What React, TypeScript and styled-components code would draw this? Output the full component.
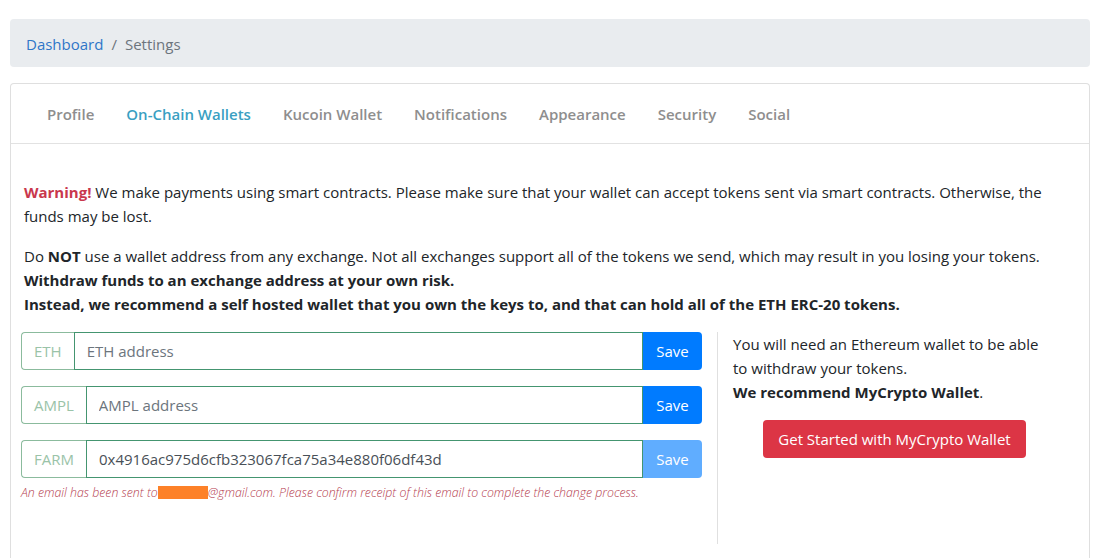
import React from "react";
import styled, { createGlobalStyle } from "styled-components";

const FONT = `"Open Sans", "Noto Sans", Arial, sans-serif`;

const Global = createGlobalStyle`
  html, body { margin: 0; padding: 0; background: #fff; }
  body { font-family: ${FONT}; font-size: 15px; color: #212529; }
  * { box-sizing: border-box; }
`;

const Page = styled.div`
  padding: 19px 11px 0 10px;
  display: flex;
  flex-direction: column;
  gap: 16px;
`;

const Breadcrumb = styled.nav`
  height: 48px;
  background: #e9ecef;
  border-radius: 4px;
  display: flex;
  align-items: center;
  padding: 1px 16px 0 16px;
  font-size: 15px;
  color: #6c757d;
`;

const Crumb = styled.a`
  color: #2f76c8;
  text-decoration: none;
`;

const Sep = styled.span`
  padding: 0 8px;
  color: #6c757d;
`;

const Card = styled.div`
  border: 1px solid #dfdfdf;
  border-bottom: none;
  border-radius: 4px 4px 0 0;
  background: #fff;
  min-height: 480px;
`;

const TabBar = styled.div`
  height: 60px;
  border-bottom: 1px solid #e2e2e2;
  display: flex;
  align-items: center;
  padding: 0 20px;
`;

const Tab = styled.a<{ $active?: boolean }>`
  padding: 0 16px;
  font-size: 15px;
  font-weight: 600;
  color: ${(p) => (p.$active ? "#3a9fc2" : "#8e8e8e")};
  text-decoration: none;
`;

const Body = styled.div`
  padding: 36px 13px 0 13px;
`;

const Para = styled.p`
  margin: 0 0 16px 0;
  line-height: 24px;
  font-size: 15px;
  color: #212529;
`;

const Danger = styled.strong`
  color: #c9374d;
  font-weight: 700;
`;

const Row = styled.div`
  display: flex;
  margin-left: -3px;
`;

const LeftCol = styled.div`
  width: 681px;
  display: flex;
  flex-direction: column;
  gap: 16px;
  padding-bottom: 43px;
`;

const RightCol = styled.div`
  flex: 1;
  margin-left: 15px;
  border-left: 1px solid #e0e0e0;
  padding-left: 15px;
  display: flex;
  flex-direction: column;
`;

const InputGroup = styled.div`
  display: flex;
  height: 38px;
`;

const Prepend = styled.span`
  display: flex;
  align-items: center;
  padding: 0 12px;
  border: 1px solid #8bbb9d;
  border-right: none;
  border-radius: 4px 0 0 4px;
  color: #9ac3a8;
  font-size: 15px;
`;

const AddrInput = styled.input`
  flex: 1;
  min-width: 0;
  border: 1px solid #449570;
  padding: 0 12px;
  font-family: ${FONT};
  font-size: 15px;
  color: #495057;
  outline: none;
  &::placeholder { color: #6c757d; opacity: 1; }
`;

const SaveBtn = styled.button<{ $disabled?: boolean }>`
  width: 59px;
  border: none;
  border-radius: 0 4px 4px 0;
  background: #007bff;
  color: #fff;
  font-family: ${FONT};
  font-size: 15px;
  opacity: ${(p) => (p.$disabled ? 0.62 : 1)};
  cursor: pointer;
`;

const Field = styled.div`
  display: flex;
  flex-direction: column;
`;

const Notice = styled.small`
  margin-top: 6px;
  font-size: 12.3px;
  font-style: italic;
  font-weight: 300;
  color: #b5404f;
  display: flex;
  align-items: center;
  white-space: pre;
`;

const Redacted = styled.span`
  display: inline-block;
  width: 50px;
  height: 13px;
  background: #fd8128;
`;

const InfoText = styled.p`
  margin: 0;
  line-height: 24px;
  font-size: 15px;
  color: #212529;
  width: 320px;
`;

const CtaWrap = styled.div`
  display: flex;
  justify-content: center;
  margin-top: 16px;
  padding-right: 20px;
`;

const Cta = styled.button`
  height: 38px;
  padding: 0 15px;
  border: none;
  border-radius: 4px;
  background: #dc3545;
  color: #fff;
  font-family: ${FONT};
  font-size: 15px;
`;

const wallets = [
  { label: "ETH", placeholder: "ETH address", value: "", disabled: false },
  { label: "AMPL", placeholder: "AMPL address", value: "", disabled: false },
  {
    label: "FARM",
    placeholder: "FARM address",
    value: "0x4916ac975d6cfb323067fca75a34e880f06df43d",
    disabled: true,
  },
];

const tabs = [
  "Profile",
  "On-Chain Wallets",
  "Kucoin Wallet",
  "Notifications",
  "Appearance",
  "Security",
  "Social",
];

export default function App() {
  return (
    <>
      <Global />
      <Page>
        <Breadcrumb>
          <Crumb href="#">Dashboard</Crumb>
          <Sep>/</Sep>
          <span>Settings</span>
        </Breadcrumb>
        <Card>
          <TabBar>
            {tabs.map((t) => (
              <Tab key={t} href="#" $active={t === "On-Chain Wallets"}>
                {t}
              </Tab>
            ))}
          </TabBar>
          <Body>
            <Para>
              <Danger>Warning!</Danger> We make payments using smart contracts. Please make sure
              that your wallet can accept tokens sent via smart contracts. Otherwise, the funds may
              be lost.
            </Para>
            <Para>
              Do <strong>NOT</strong> use a wallet address from any exchange. Not all exchanges
              support all of the tokens we send, which may result in you losing your tokens.
              <br />
              <strong>Withdraw funds to an exchange address at your own risk.</strong>
              <br />
              <strong>
                Instead, we recommend a self hosted wallet that you own the keys to, and that can
                hold all of the ETH ERC-20 tokens.
              </strong>
            </Para>
            <Row>
              <LeftCol>
                {wallets.map((w) => (
                  <Field key={w.label}>
                    <InputGroup>
                      <Prepend>{w.label}</Prepend>
                      <AddrInput placeholder={w.placeholder} defaultValue={w.value} />
                      <SaveBtn $disabled={w.disabled}>Save</SaveBtn>
                    </InputGroup>
                    {w.disabled && (
                      <Notice>
                        An email has been sent to<Redacted />
                        @gmail.com. Please confirm receipt of this email to complete the change process.
                      </Notice>
                    )}
                  </Field>
                ))}
              </LeftCol>
              <RightCol>
                <InfoText>
                  You will need an Ethereum wallet to be able to withdraw your tokens.
                  <br />
                  <strong>We recommend MyCrypto Wallet</strong>.
                </InfoText>
                <CtaWrap>
                  <Cta>Get Started with MyCrypto Wallet</Cta>
                </CtaWrap>
              </RightCol>
            </Row>
          </Body>
        </Card>
      </Page>
    </>
  );
}
